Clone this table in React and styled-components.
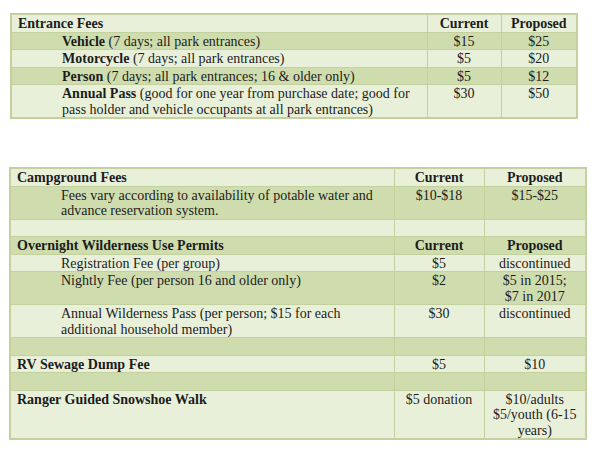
import React from 'react';
import styled, { createGlobalStyle } from 'styled-components';

const GlobalStyle = createGlobalStyle`
  html, body {
    margin: 0;
    padding: 0;
    background: #ffffff;
  }
  body {
    font-family: "Liberation Serif", "Times New Roman", serif;
    color: #1c1c1c;
  }
`;

const colors = {
  light: '#e9f0da',
  dark: '#cfdcae',
  border: '#c3d19e',
};

const Page = styled.div`
  width: 600px;
  height: 452px;
  padding: 13px 0 0 0;
  box-sizing: border-box;
  display: flex;
  flex-direction: column;
  gap: 48px;
`;

const FeeTable = styled.table`
  border-collapse: collapse;
  table-layout: fixed;
  margin-left: ${(p) => p.left}px;
  width: ${(p) => p.width}px;
  border: 2px solid ${colors.border};
  font-family: "Liberation Serif", "Times New Roman", serif;
  font-size: 14px;
  line-height: 15.5px;
  color: #1c1c1c;
`;

const Row = styled.tr`
  background: ${(p) => (p.dark ? colors.dark : colors.light)};
`;

const Cell = styled.td`
  border: 1px solid ${colors.border};
  padding: 1px ${(p) => (p.center ? 3 : 6)}px 0 ${(p) => (p.indent ? 50 : p.center ? 3 : 6)}px;
  vertical-align: top;
  text-align: ${(p) => (p.center ? 'center' : 'left')};
  font-weight: ${(p) => (p.bold ? 'bold' : 'normal')};
  font-size: 14px;
  line-height: 15.5px;
  height: 15.5px;
`;

const Strong = styled.b`
  font-weight: bold;
`;

const entrance = [
  { label: 'Vehicle', note: ' (7 days; all park entrances)', cur: '$15', prop: '$25' },
  { label: 'Motorcycle', note: ' (7 days; all park entrances)', cur: '$5', prop: '$20' },
  { label: 'Person', note: ' (7 days; all park entrances; 16 & older only)', cur: '$5', prop: '$12' },
  {
    label: 'Annual Pass',
    note: ' (good for one year from purchase date; good for pass holder and vehicle occupants at all park entrances)',
    cur: '$30',
    prop: '$50',
  },
];

const Blank = ({ dark }) => (
  <Row dark={dark}>
    <Cell />
    <Cell />
    <Cell />
  </Row>
);

export default function App() {
  return (
    <>
      <GlobalStyle />
      <Page>
        <FeeTable left={10} width={566}>
          <colgroup>
            <col style={{ width: 416 }} />
            <col style={{ width: 74 }} />
            <col style={{ width: 76 }} />
          </colgroup>
          <tbody>
            <Row>
              <Cell bold>Entrance Fees</Cell>
              <Cell bold center>Current</Cell>
              <Cell bold center>Proposed</Cell>
            </Row>
            {entrance.map((e, i) => (
              <Row key={e.label} dark={i % 2 === 0}>
                <Cell indent>
                  <Strong>{e.label}</Strong>
                  {e.note}
                </Cell>
                <Cell center>{e.cur}</Cell>
                <Cell center>{e.prop}</Cell>
              </Row>
            ))}
          </tbody>
        </FeeTable>

        <FeeTable left={9} width={576}>
          <colgroup>
            <col style={{ width: 384 }} />
            <col style={{ width: 90 }} />
            <col style={{ width: 102 }} />
          </colgroup>
          <tbody>
            <Row>
              <Cell bold>Campground Fees</Cell>
              <Cell bold center>Current</Cell>
              <Cell bold center>Proposed</Cell>
            </Row>
            <Row dark>
              <Cell indent>Fees vary according to availability of potable water and advance reservation system.</Cell>
              <Cell center>$10-$18</Cell>
              <Cell center>$15-$25</Cell>
            </Row>
            <Blank />
            <Row dark>
              <Cell bold>Overnight Wilderness Use Permits</Cell>
              <Cell bold center>Current</Cell>
              <Cell bold center>Proposed</Cell>
            </Row>
            <Row>
              <Cell indent>Registration Fee (per group)</Cell>
              <Cell center>$5</Cell>
              <Cell center>discontinued</Cell>
            </Row>
            <Row dark>
              <Cell indent>Nightly Fee (per person 16 and older only)</Cell>
              <Cell center>$2</Cell>
              <Cell center>$5 in 2015;<br />$7 in 2017</Cell>
            </Row>
            <Row>
              <Cell indent>Annual Wilderness Pass (per person; $15 for each additional household member)</Cell>
              <Cell center>$30</Cell>
              <Cell center>discontinued</Cell>
            </Row>
            <Blank dark />
            <Row>
              <Cell bold>RV Sewage Dump Fee</Cell>
              <Cell center>$5</Cell>
              <Cell center>$10</Cell>
            </Row>
            <Blank dark />
            <Row>
              <Cell bold>Ranger Guided Snowshoe Walk</Cell>
              <Cell center>$5 donation</Cell>
              <Cell center>$10/adults<br />$5/youth (6-15<br />years)</Cell>
            </Row>
          </tbody>
        </FeeTable>
      </Page>
    </>
  );
}
